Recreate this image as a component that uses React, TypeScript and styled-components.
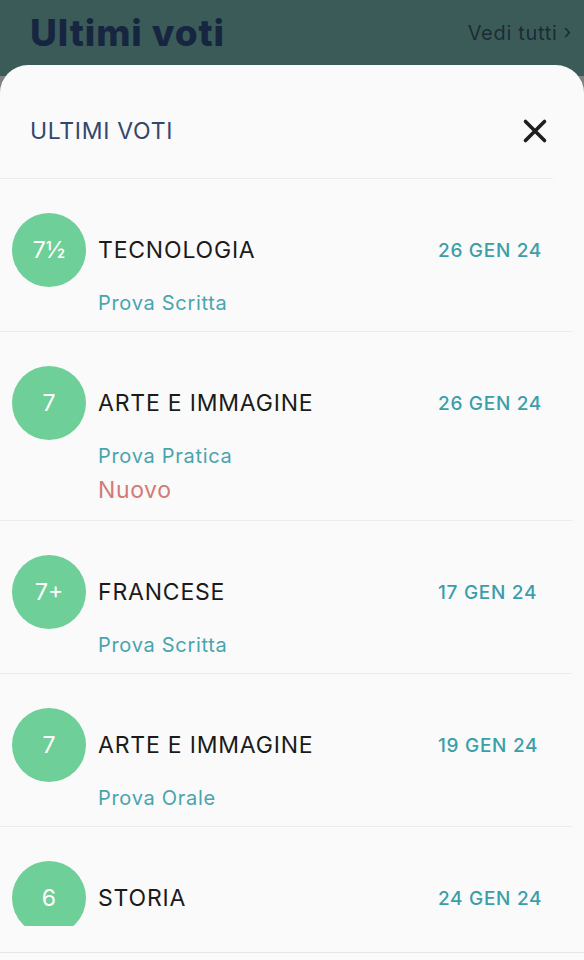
import React from 'react';
import styled, { createGlobalStyle } from 'styled-components';

const GlobalStyle = createGlobalStyle`
  html, body {
    margin: 0;
    padding: 0;
    background: #7d8180;
  }
  body {
    font-family: 'Inter', 'Noto Sans', sans-serif;
    -webkit-font-smoothing: antialiased;
  }
`;

interface IGrade {
  grade: string;
  subject: string;
  date: string;
  kind: string;
  isNew?: boolean;
}

const grades: IGrade[] = [
  { grade: '7½', subject: 'TECNOLOGIA', date: '26 GEN 24', kind: 'Prova Scritta' },
  { grade: '7', subject: 'ARTE E IMMAGINE', date: '26 GEN 24', kind: 'Prova Pratica', isNew: true },
  { grade: '7+', subject: 'FRANCESE', date: '17 GEN 24', kind: 'Prova Scritta' },
  { grade: '7', subject: 'ARTE E IMMAGINE', date: '19 GEN 24', kind: 'Prova Orale' },
  { grade: '6', subject: 'STORIA', date: '24 GEN 24', kind: 'Prova Scritta' },
];

const App: React.FC = () => {
  return (
    <Page>
      <GlobalStyle />
      <TopBar>
        <PageTitle>Ultimi voti</PageTitle>
        <SeeAll>
          Vedi tutti <Chevron>›</Chevron>
        </SeeAll>
      </TopBar>

      <Sheet>
        <SheetHeader>
          <SheetTitle>ULTIMI VOTI</SheetTitle>
          <CloseButton aria-label='Chiudi'>
            <svg width='26' height='26' viewBox='0 0 26 26'>
              <path
                d='M3.5 3.5 L22.5 22.5 M22.5 3.5 L3.5 22.5'
                stroke='#1e1e1e'
                strokeWidth='3.6'
                strokeLinecap='round'
              />
            </svg>
          </CloseButton>
        </SheetHeader>

        <List>
          {grades.map((g, i) => (
            <Row key={i}>
              <Badge>{g.grade}</Badge>
              <RowBody>
                <RowHead>
                  <Subject>{g.subject}</Subject>
                  <DateLabel>{g.date}</DateLabel>
                </RowHead>
                <Kind>{g.kind}</Kind>
                {g.isNew && <NewTag>Nuovo</NewTag>}
              </RowBody>
            </Row>
          ))}
        </List>
        <Footer />
      </Sheet>
    </Page>
  );
};

const Page = styled.div`
  position: relative;
  width: 584px;
  height: 960px;
  overflow: hidden;
  background: linear-gradient(#3b5b58 0 76px, #7d8180 76px);
`;

const TopBar = styled.div`
  height: 65px;
  display: flex;
  align-items: center;
  justify-content: space-between;
  padding: 0 12px 0 30px;
  box-sizing: border-box;
`;

const PageTitle = styled.div`
  font-family: 'Inter', sans-serif;
  font-weight: 800;
  font-size: 37px;
  letter-spacing: 0.9px;
  color: #172640;
  margin-top: -1px;
`;

const SeeAll = styled.div`
  font-size: 20px;
  letter-spacing: 0.7px;
  color: #1d2b36;
  display: flex;
  align-items: center;
  gap: 6px;
`;

const Chevron = styled.span`
  font-size: 20px;
  line-height: 1;
  margin-top: -2px;
`;

const Sheet = styled.div`
  height: 895px;
  background: #fafafa;
  border-radius: 28px 28px 0 0;
  display: flex;
  flex-direction: column;
`;

const SheetHeader = styled.div`
  height: 114px;
  box-sizing: border-box;
  margin-right: 31px;
  padding: 18px 0 0 30px;
  display: flex;
  align-items: center;
  justify-content: space-between;
  border-bottom: 1px solid #ebebeb;
`;

const SheetTitle = styled.div`
  font-size: 23px;
  color: #33476d;
  letter-spacing: 0.7px;
`;

const CloseButton = styled.div`
  width: 26px;
  height: 26px;
  display: flex;
  margin-right: 5px;
`;

const List = styled.div`
  height: 747px;
  overflow: hidden;
`;

const Row = styled.div`
  display: flex;
  padding: 34px 0 12px 12px;
  margin-right: 12px;
  border-bottom: 1px solid #ececec;
`;

const Badge = styled.div`
  width: 74px;
  height: 74px;
  flex-shrink: 0;
  border-radius: 50%;
  background: #6ecf98;
  color: #ffffff;
  font-size: 23px;
  display: flex;
  align-items: center;
  justify-content: center;
`;

const RowBody = styled.div`
  flex: 1;
  margin-left: 12px;
  display: flex;
  flex-direction: column;
`;

const RowHead = styled.div`
  height: 74px;
  display: flex;
  align-items: center;
`;

const Subject = styled.div`
  width: 340px;
  font-size: 23px;
  color: #1b1b1b;
  letter-spacing: 0.8px;
`;

const DateLabel = styled.div`
  font-size: 19px;
  font-weight: 500;
  color: #3b9ea9;
  letter-spacing: 0.7px;
`;

const Kind = styled.div`
  height: 32px;
  line-height: 32px;
  font-size: 20px;
  color: #49a4ae;
  letter-spacing: 0.7px;
`;

const NewTag = styled.div`
  height: 36px;
  line-height: 36px;
  font-size: 23px;
  color: #d27b77;
  letter-spacing: 0.6px;
`;

const Footer = styled.div`
  height: 26px;
  border-bottom: 1px solid #e6e6e6;
`;

export default App;
